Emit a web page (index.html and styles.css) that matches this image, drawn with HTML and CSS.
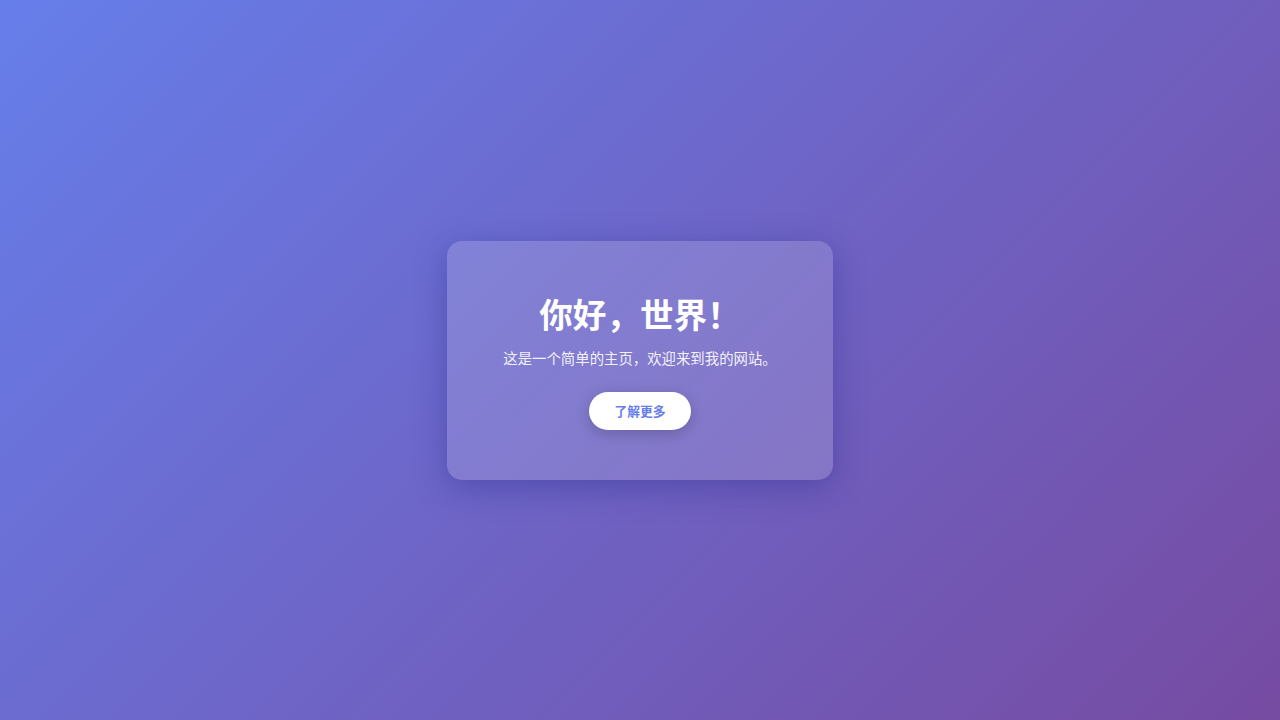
FILE: index.html
```html
<!DOCTYPE html>
<html lang="zh-CN">
<head>
<meta charset="UTF-8">
<title>你好，世界！</title>
<link rel="stylesheet" href="styles.css">
</head>
<body>
  <main class="card">
    <h1 class="title">你好，世界！</h1>
    <p class="subtitle">这是一个简单的主页，欢迎来到我的网站。</p>
    <a class="btn" href="#">了解更多</a>
  </main>
</body>
</html>
```
FILE: styles.css
```css
html, body {
  margin: 0;
  padding: 0;
}
body {
  min-height: 100vh;
  display: flex;
  align-items: center;
  justify-content: center;
  background: linear-gradient(135deg, #667eea 0%, #764ba2 100%);
  font-family: "Noto Sans CJK SC", "Noto Sans", sans-serif;
  color: #fff;
}
.card {
  box-sizing: border-box;
  width: 386px;
  padding: 50px 40px 50px;
  background: rgba(255, 255, 255, 0.15);
  border-radius: 15px;
  box-shadow: 0 8px 32px rgba(31, 38, 135, 0.37);
  text-align: center;
  display: flex;
  flex-direction: column;
  align-items: center;
}
.title {
  margin: 0 0 10px;
  font-size: 33.6px;
  line-height: 46px;
  font-weight: 700;
}
.subtitle {
  margin: 0 0 24px;
  font-size: 14.4px;
  line-height: 21px;
  color: rgba(255, 255, 255, 0.92);
}
.btn {
  display: inline-block;
  height: 38px;
  line-height: 38px;
  padding: 0 25px;
  border-radius: 19px;
  background: #fff;
  color: #667eea;
  font-size: 12.8px;
  font-weight: 700;
  text-decoration: none;
  box-shadow: 0 4px 15px rgba(0, 0, 0, 0.2);
}
```
